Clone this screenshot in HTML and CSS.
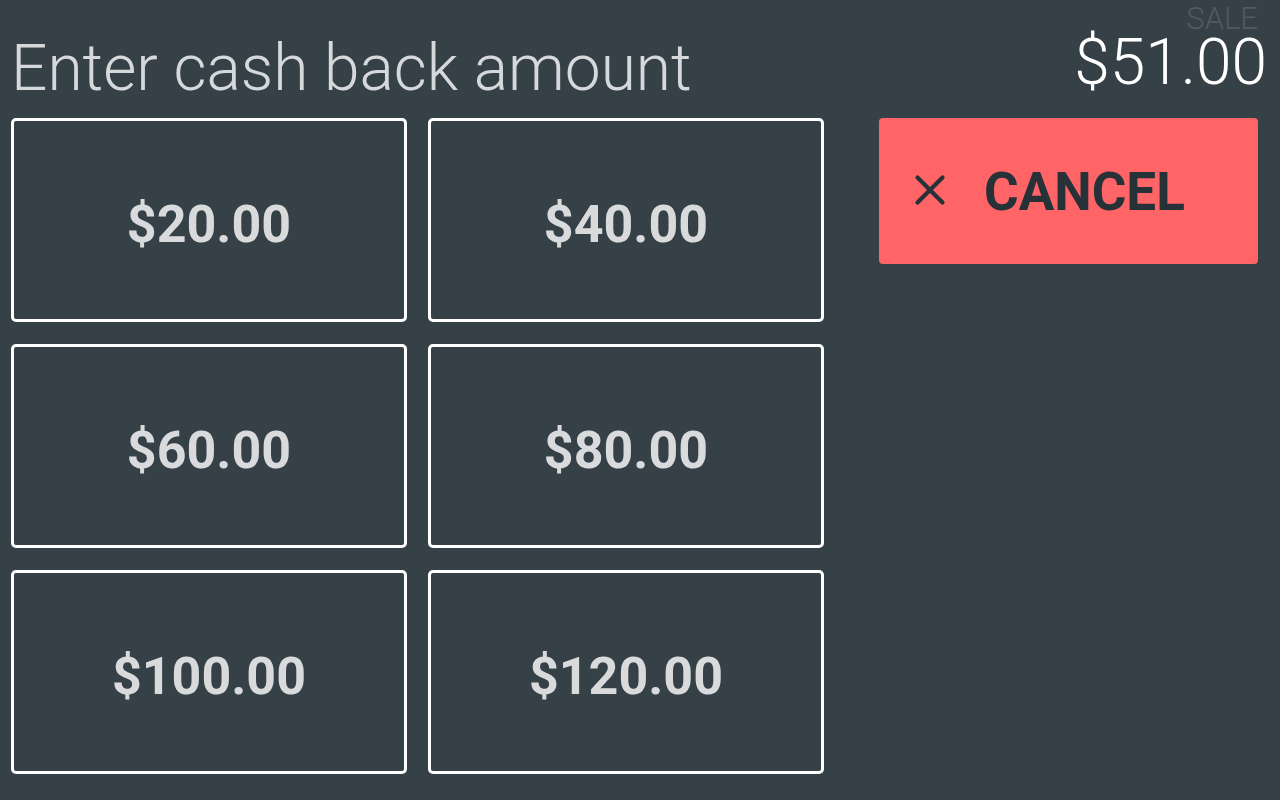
FILE: index.html
```html
<!DOCTYPE html>
<html lang="en">
<head>
<meta charset="utf-8">
<title>Cash back</title>
<link rel="stylesheet" href="styles.css">
</head>
<body>
<div class="screen">
  <header class="header">
    <h1 class="title">Enter cash back amount</h1>
    <div class="total">
      <div class="total-label">SALE</div>
      <div class="total-amount">$51.00</div>
    </div>
  </header>
  <main class="content">
    <div class="amounts">
      <button class="amount-btn">$20.00</button>
      <button class="amount-btn">$40.00</button>
      <button class="amount-btn">$60.00</button>
      <button class="amount-btn">$80.00</button>
      <button class="amount-btn">$100.00</button>
      <button class="amount-btn">$120.00</button>
    </div>
    <div class="actions">
      <button class="cancel-btn">
        <svg class="cancel-icon" viewBox="0 0 48 48" width="48" height="48" aria-hidden="true">
          <path d="M11.5 11.5 L36.5 36.5 M36.5 11.5 L11.5 36.5" stroke="#263238" stroke-width="4.2" stroke-linecap="round" fill="none"/>
        </svg>
        <span class="cancel-text">CANCEL</span>
      </button>
    </div>
  </main>
</div>
</body>
</html>
```

FILE: styles.css
```css
* { box-sizing: border-box; }
html, body {
  margin: 0;
  padding: 0;
  background: #364047;
}
body {
  font-family: Roboto, "Noto Sans", "Liberation Sans", sans-serif;
  width: 1280px;
  height: 800px;
  overflow: hidden;
}
.screen {
  display: flex;
  flex-direction: column;
  height: 800px;
}
.header {
  display: flex;
  justify-content: space-between;
  align-items: flex-start;
  height: 118px;
  padding-left: 11px;
}
.title {
  margin: 37px 0 0 0;
  font-size: 64px;
  line-height: 64px;
  font-weight: 300;
  color: #d6d9db;
  letter-spacing: 0;
}
.total {
  display: flex;
  flex-direction: column;
  align-items: flex-end;
  padding-top: 4px;
}
.total-label {
  font-size: 31px;
  line-height: 30px;
  font-weight: 300;
  color: #4f5a61;
  padding-right: 22px;
}
.total-amount {
  margin-top: 0;
  font-size: 64px;
  line-height: 58px;
  font-weight: 300;
  color: #ffffff;
  padding-right: 13px;
}
.content {
  display: flex;
  align-items: flex-start;
  padding-left: 11px;
  gap: 55px;
}
.amounts {
  display: grid;
  grid-template-columns: 396px 396px;
  grid-auto-rows: 204px;
  column-gap: 21px;
  row-gap: 22px;
}
.amount-btn {
  background: transparent;
  border: 3px solid #ffffff;
  border-radius: 5px;
  color: #d8dadc;
  font-family: Roboto, "Noto Sans", "Liberation Sans", sans-serif;
  font-size: 52px;
  font-weight: 700;
  padding: 0;
  margin: 0;
  display: flex;
  align-items: center;
  justify-content: center;
  padding-top: 8px;
}
.actions {
  width: 379px;
}
.cancel-btn {
  width: 379px;
  height: 146px;
  background: #ff6466;
  border: none;
  border-radius: 4px;
  display: flex;
  align-items: center;
  padding: 0 0 0 27px;
  margin: 0;
  gap: 30px;
  color: #263238;
  font-family: Roboto, "Noto Sans", "Liberation Sans", sans-serif;
}
.cancel-icon {
  display: block;
  flex: none;
  margin-top: -2px;
}
.cancel-text {
  font-size: 53px;
  font-weight: 700;
  line-height: 1;
  padding-top: 2px;
}
```
